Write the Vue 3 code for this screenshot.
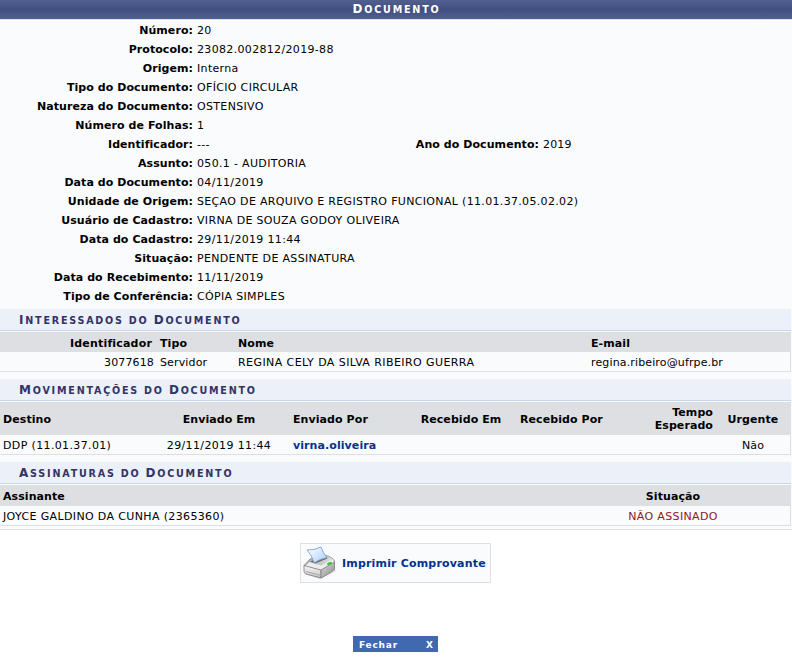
<template>
  <div class="page">
    <section class="document">
      <h1 class="title"><span class="cap">Documento</span></h1>

      <dl class="fields">
        <div v-for="field in fields" :key="field.label" class="field">
          <dt>{{ field.label }}:</dt>
          <dd>{{ field.value }}</dd>
          <template v-if="field.extra">
            <dt>{{ field.extra.label }}:</dt>
            <dd class="digits">{{ field.extra.value }}</dd>
          </template>
        </div>
      </dl>

      <div class="block">
        <h2 class="caption"><span class="cap">Interessados</span> do <span class="cap">Documento</span></h2>
        <div class="row head people">
          <span class="right id-head">Identificador</span>
          <span>Tipo</span>
          <span>Nome</span>
          <span>E-mail</span>
        </div>
        <div class="row body people">
          <span class="right digits">3077618</span>
          <span class="digits">Servidor</span>
          <span class="person">REGINA CELY DA SILVA RIBEIRO GUERRA</span>
          <span class="digits">regina.ribeiro@ufrpe.br</span>
        </div>
      </div>

      <div class="block">
        <h2 class="caption"><span class="cap">Movimentações</span> do <span class="cap">Documento</span></h2>
        <div class="row head moves tall">
          <span>Destino</span>
          <span class="center">Enviado Em</span>
          <span>Enviado Por</span>
          <span class="center">Recebido Em</span>
          <span>Recebido Por</span>
          <span class="right">Tempo<br />Esperado</span>
          <span class="center">Urgente</span>
        </div>
        <div class="row body moves">
          <span>DDP (11.01.37.01)</span>
          <span class="center">29/11/2019 11:44</span>
          <span><a class="link">virna.oliveira</a></span>
          <span></span>
          <span></span>
          <span></span>
          <span class="center digits">Não</span>
        </div>
      </div>

      <div class="block">
        <h2 class="caption"><span class="cap">Assinaturas</span> do <span class="cap">Documento</span></h2>
        <div class="row head signatures">
          <span>Assinante</span>
          <span class="center">Situação</span>
        </div>
        <div class="row body signatures">
          <span>JOYCE GALDINO DA CUNHA (2365360)</span>
          <span class="center unsigned">NÃO ASSINADO</span>
        </div>
      </div>
    </section>

    <div class="actions">
      <a class="print">
        <svg class="printer" width="34" height="34" viewBox="0 0 34 34">
          <defs>
            <linearGradient id="paper" x1="0" y1="0" x2="1" y2="1">
              <stop offset="0.1" stop-color="#fafdff" />
              <stop offset="1" stop-color="#a4cdf6" />
            </linearGradient>
            <linearGradient id="top" x1="0" y1="0" x2="1" y2="0">
              <stop offset="0" stop-color="#a8a8a8" />
              <stop offset="1" stop-color="#e2e2e2" />
            </linearGradient>
            <linearGradient id="front" x1="0" y1="0" x2="0" y2="1">
              <stop offset="0" stop-color="#f8f8f8" />
              <stop offset="1" stop-color="#c4c4c4" />
            </linearGradient>
            <linearGradient id="side" x1="0" y1="0" x2="1" y2="1">
              <stop offset="0" stop-color="#d8d8d8" />
              <stop offset="1" stop-color="#8f8f8f" />
            </linearGradient>
          </defs>
          <path d="M2 28 L17 33 L33 25 L31 21 Z" fill="#dcdcdc" />
          <path d="M1 19.500 L7 13 L23 9.500 Q30 11 31.500 15.500 L18 24 Z" fill="url(#top)" stroke="#888" stroke-width=".8" />
          <path d="M1 19.500 L18 24 L18 32 L3 28 Q1 27 1 25 Z" fill="url(#front)" stroke="#777" stroke-width=".8" />
          <path d="M18 24 L31.500 15.500 L31.500 23 Q31 25 18 32 Z" fill="url(#side)" stroke="#777" stroke-width=".8" />
          <path d="M2.500 19.500 L6.500 16 L18 19.500 L29 13.500 L31 15.800 L18 23.500 Z" fill="#ededed" />
          <path d="M7 15.500 L22 10.500 L24.500 12.500 L12 17.500 Z" fill="#6b6b6b" />
          <path d="M4 4 Q11 4.500 18 1 Q20 7 24 11.500 Q17 13 11 17 Q9 9 4 4 Z" fill="url(#paper)" stroke="#6d97ca" stroke-width=".8" />
          <path d="M3 25.500 L18 29.500" stroke="#a8a8a8" fill="none" />
          <ellipse cx="26.500" cy="17.500" rx="2.600" ry="1.300" fill="#2fc936" transform="rotate(-20 26.500 17.500)" />
        </svg>
        <span>Imprimir Comprovante</span>
      </a>
      <button class="close" type="button">
        <span>Fechar</span>
        <span class="x">X</span>
      </button>
    </div>
  </div>
</template>

<script setup>
const fields = [
  { label: 'Número', value: '20' },
  { label: 'Protocolo', value: '23082.002812/2019-88' },
  { label: 'Origem', value: 'Interna' },
  { label: 'Tipo do Documento', value: 'OFÍCIO CIRCULAR' },
  { label: 'Natureza do Documento', value: 'OSTENSIVO' },
  { label: 'Número de Folhas', value: '1' },
  { label: 'Identificador', value: '---', extra: { label: 'Ano do Documento', value: '2019' } },
  { label: 'Assunto', value: '050.1 - AUDITORIA' },
  { label: 'Data do Documento', value: '04/11/2019' },
  { label: 'Unidade de Origem', value: 'SEÇAO DE ARQUIVO E REGISTRO FUNCIONAL (11.01.37.05.02.02)' },
  { label: 'Usuário de Cadastro', value: 'VIRNA DE SOUZA GODOY OLIVEIRA' },
  { label: 'Data do Cadastro', value: '29/11/2019 11:44' },
  { label: 'Situação', value: 'PENDENTE DE ASSINATURA' },
  { label: 'Data do Recebimento', value: '11/11/2019' },
  { label: 'Tipo de Conferência', value: 'CÓPIA SIMPLES' },
];
</script>

<style>
body {
  margin: 0;
  background: #fff;
}
</style>

<style scoped>
.page {
  width: 792px;
  height: 660px;
  overflow: hidden;
  font: 11px/13px Verdana, "DejaVu Sans", sans-serif;
  color: #000;
  background: #fff;
}

.document {
  box-sizing: border-box;
  height: 530px;
  background: #fafbfd;
  border-bottom: 1px solid #dedfe3;
}

.title {
  box-sizing: border-box;
  height: 20px;
  margin: 0;
  padding-left: 1px;
  border-bottom: 1px solid #dedfe3;
  background: linear-gradient(#51608f, #404e82 50%, #51608f);
  color: #fff;
  font-size: 9.6px;
  line-height: 18px;
  letter-spacing: 1.8px;
  text-align: center;
  text-transform: uppercase;
}

.cap {
  display: inline-block;
}

.cap::first-letter {
  font-size: 12px;
}

.fields {
  margin: 0;
  padding: 1px 0 3px;
}

.field {
  display: grid;
  grid-template-columns: 193px 218px 128px 1fr;
  height: 19px;
  line-height: 19px;
}

.field dt {
  font-weight: bold;
  letter-spacing: 0.07px;
  text-align: right;
  white-space: nowrap;
}

.field dd {
  margin: 0;
  padding-left: 4px;
  letter-spacing: 0.33px;
  white-space: nowrap;
}

.block {
  width: 791px;
  margin-bottom: 7px;
}

.caption {
  box-sizing: border-box;
  height: 22px;
  margin: 0 0 1px;
  padding-left: 19px;
  border-bottom: 1px solid #c8d5ec;
  background: #ebf0f9;
  color: #333366;
  font-size: 9.6px;
  line-height: 23px;
  letter-spacing: 1.78px;
  text-transform: uppercase;
}

.row {
  display: grid;
  box-sizing: border-box;
  align-items: center;
  height: 20px;
  padding-top: 2px;
  white-space: nowrap;
}

.head {
  background: #dedfe3;
  font-weight: bold;
  letter-spacing: 0.08px;
}

.body {
  border-right: 1px solid #dedfe3;
  border-bottom: 1px solid #dedfe3;
  letter-spacing: 0.36px;
}

.people {
  grid-template-columns: 154px 78px 353px 1fr;
}

.people > :nth-child(n + 2) {
  padding-left: 6px;
}

.id-head {
  padding-right: 2px;
  letter-spacing: 0.18px;
}

.person {
  letter-spacing: 0.42px;
}

.row .digits,
.field .digits {
  letter-spacing: 0.14px;
}

.moves {
  grid-template-columns: 148px 142px 127px 88px 95px 113px 80px;
}

.moves > :nth-child(odd) {
  padding-left: 3px;
}

.moves > :nth-child(5) {
  padding-left: 15px;
}

.moves > :last-child {
  padding-left: 0;
}

.tall {
  height: 33px;
  padding-top: 1px;
}

.signatures {
  grid-template-columns: 556px 228px;
  padding-left: 3px;
}

.signatures.head {
  height: 21px;
}

.right {
  text-align: right;
}

.center {
  text-align: center;
}

.unsigned {
  color: #8b1a1a;
}

.link,
.print {
  color: #003390;
  font-weight: bold;
}

.link {
  letter-spacing: 0.08px;
}

.actions {
  display: flex;
  flex-direction: column;
  align-items: center;
  padding-top: 13px;
}

.print {
  display: flex;
  box-sizing: border-box;
  align-items: center;
  gap: 5px;
  width: 191px;
  height: 40px;
  margin-right: 1px;
  padding-left: 2px;
  border: 1px solid #dedfe3;
  background: #fafbfd;
  letter-spacing: 0.18px;
  white-space: nowrap;
}

.printer {
  flex: none;
}

.close {
  display: flex;
  box-sizing: border-box;
  justify-content: space-between;
  align-items: center;
  width: 85px;
  height: 16px;
  margin: 53px 1px 0 0;
  padding: 1px 5px 0 6px;
  border: 0;
  background: #4169b0;
  color: #fff;
  font: bold 9px/14px Verdana, "DejaVu Sans", sans-serif;
  letter-spacing: 0.8px;
}

.x {
  letter-spacing: 0;
}
</style>
